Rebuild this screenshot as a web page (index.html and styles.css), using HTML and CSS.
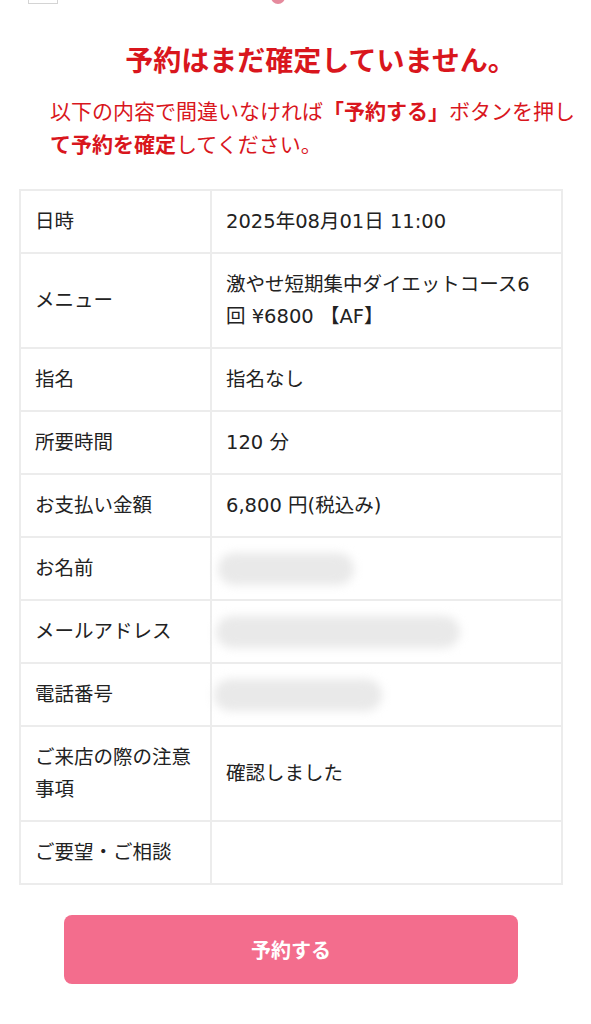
FILE: index.html
```html
<!DOCTYPE html>
<html lang="ja">
  <head>
    <meta charset="UTF-8" />
    <meta name="viewport" content="width=device-width, initial-scale=1.0" />
    <title>予約確認</title>
    <link rel="stylesheet" href="styles.css">
  </head>
  <body>
    <div class="topbar">
      <span class="check"></span>
      <span class="dot"></span>
    </div>
    <h1 class="title">予約はまだ確定していません。</h1>
    <p class="notice">以下の内容で間違いなければ<b>「予約する」</b>ボタンを押し<b>て予約を確定</b>してください。</p>
    <table class="confirm">
      <tr>
        <th>日時</th>
        <td>2025年08月01日 11:00</td>
      </tr>
      <tr>
        <th>メニュー</th>
        <td>激やせ短期集中ダイエットコース6回 ¥6800 【AF】</td>
      </tr>
      <tr>
        <th>指名</th>
        <td>指名なし</td>
      </tr>
      <tr>
        <th>所要時間</th>
        <td>120 分</td>
      </tr>
      <tr>
        <th>お支払い金額</th>
        <td>6,800 円(税込み)</td>
      </tr>
      <tr>
        <th>お名前</th>
        <td><span class="blur blur-name"></span></td>
      </tr>
      <tr>
        <th>メールアドレス</th>
        <td><span class="blur blur-mail"></span></td>
      </tr>
      <tr>
        <th>電話番号</th>
        <td><span class="blur blur-tel"></span></td>
      </tr>
      <tr>
        <th>ご来店の際の注意事項</th>
        <td>確認しました</td>
      </tr>
      <tr>
        <th>ご要望・ご相談</th>
        <td></td>
      </tr>
    </table>
    <div class="actions">
      <a class="btn" href="#">予約する</a>
    </div>
  </body>
</html>
```

FILE: styles.css
```css
* {
  margin: 0;
  padding: 0;
  box-sizing: border-box;
}
body {
  font-family: "Noto Sans CJK JP", "Noto Sans", sans-serif;
  color: #222;
  background: #fff;
}
.topbar {
  height: 4px;
  overflow: hidden;
  display: flex;
  align-items: flex-end;
}
.topbar .check {
  width: 30px;
  height: 30px;
  margin-left: 28px;
  border: 1px solid #d4d4d4;
  flex: none;
}
.topbar .dot {
  width: 14px;
  height: 14px;
  margin-left: 213px;
  border-radius: 50%;
  background: #e58a9d;
  flex: none;
}
.title {
  margin-top: 34px;
  padding-left: 50px;
  text-align: center;
  font-size: 28px;
  line-height: 42px;
  font-weight: bold;
  color: #d9161d;
}
.notice {
  margin-top: 14px;
  padding: 0 12px 0 50px;
  font-size: 21px;
  line-height: 33px;
  color: #d9161d;
}
.notice b {
  font-weight: bold;
}
.confirm {
  margin: 29px 0 0 19px;
  width: 544px;
  border-collapse: collapse;
  font-family: "DejaVu Sans", "Noto Sans CJK JP", sans-serif;
  font-size: 19.5px;
  line-height: 32px;
}
.confirm th,
.confirm td {
  border: 2px solid #ececec;
  padding: 14.5px 14px;
  text-align: left;
  font-weight: normal;
  vertical-align: middle;
}
.confirm th {
  width: 191px;
}
.confirm td {
  padding-right: 20px;
}
.blur {
  display: block;
  height: 32px;
  border-radius: 16px;
  background: #e9e9e9;
  filter: blur(5px);
  margin-left: -8px;
}
.blur-name {
  width: 136px;
}
.blur-mail {
  width: 244px;
  margin-left: -10px;
}
.blur-tel {
  width: 168px;
  margin-left: -12px;
}
.actions {
  display: flex;
  justify-content: flex-start;
  padding: 30px 0 0 64px;
}
a {
  text-decoration: none;
}
.btn {
  display: block;
  width: 454px;
  height: 69px;
  line-height: 69px;
  border-radius: 8px;
  background: #f36d8d;
  color: #fff;
  text-align: center;
  font-size: 20px;
  font-weight: bold;
}
```
